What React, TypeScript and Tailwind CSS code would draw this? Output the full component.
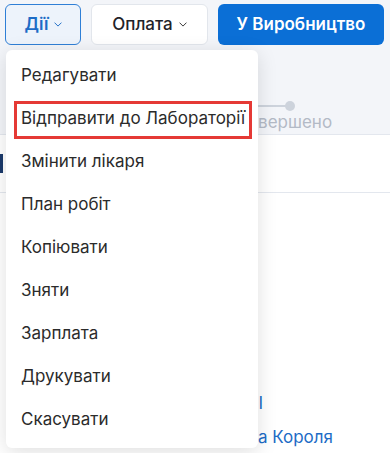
import React from "react";

const Chevron = ({ className }: { className?: string }) => (
  <svg viewBox="0 0 10 6" className={className} fill="none" stroke="currentColor" strokeWidth="1.2" strokeLinecap="round" strokeLinejoin="round">
    <path d="M1 1l4 4 4-4" />
  </svg>
);

const items = [
  "Редагувати",
  "Відправити до Лабораторії",
  "Змінити лікаря",
  "План робіт",
  "Копіювати",
  "Зняти",
  "Зарплата",
  "Друкувати",
  "Скасувати",
];

export default function App() {
  return (
    <div className="relative w-[390px] h-[453px] overflow-hidden bg-white" style={{ fontFamily: "Inter, 'Noto Sans', sans-serif" }}>
      {/* page underneath */}
      <div className="flex flex-col">
        <div className="bg-[#f3f5f9] h-[135px] border-b border-[#e3e7ee] flex flex-col">
          <div className="flex items-center gap-[10px] pl-[5px] pt-[4px]">
            <button className="h-[41px] w-[76px] rounded-[6px] border border-[#2f7fd6] bg-[#edf3fb] text-[#1d6cc6] font-semibold text-[17px] flex items-center justify-center gap-[5px]">
              Дії <Chevron className="w-[8px] h-[5px] text-[#1d6cc6]" />
            </button>
            <button className="h-[41px] w-[117px] rounded-[6px] border border-[#e2e6ec] bg-white text-[#1f2329] font-medium text-[17px] flex items-center justify-center gap-[6px]">
              Оплата <Chevron className="w-[8px] h-[5px] text-[#333]" />
            </button>
            <button className="h-[41px] w-[166px] rounded-[6px] bg-[#0b6fd6] text-white font-semibold text-[17px] flex items-center justify-center">
              У Виробництво
            </button>
          </div>
          <div className="relative mt-[60px] ml-[258px] h-[35px]">
            <div className="absolute left-0 top-[0px] w-[31px] h-[2px] bg-[#cdd3dc]" />
            <div className="absolute left-[27px] top-[-4px] w-[10px] h-[10px] rounded-full bg-[#cdd3dc]" />
            <div className="absolute left-[-20px] top-[5px] text-[17px] text-[#b3bac6]">Завершено</div>
          </div>
        </div>
        <div className="h-[58px] border-b border-[#e3e7ee] flex items-center">
          <div className="w-[3px] h-[19px] bg-[#1b3a6b]" />
        </div>
        <div className="flex flex-col pt-[199px] gap-[12px] text-[17px] text-[#1d6cc6]">
          <div className="w-[263px] text-right leading-[22px]">Адреса лабораторії I</div>
          <div className="w-[333px] text-right leading-[22px]">Вулиця Антона Короля</div>
        </div>
      </div>

      {/* dropdown menu overlay */}
      <div className="absolute left-[6px] top-[50px] w-[252px] h-[398px] bg-white rounded-[6px] shadow-[0_4px_20px_rgba(0,0,0,0.13)] pt-[4px]">
        {items.map((t, i) => (
          <div key={t} className="relative h-[43px] flex items-center pl-[15px] text-[17px] text-[#2b2b2b]">
            {i === 1 && <div className="absolute left-[8px] top-[4px] w-[238px] h-[38px] border-[3px] border-[#e53935]" />}
            <span className="relative">{t}</span>
          </div>
        ))}
      </div>
    </div>
  );
}
